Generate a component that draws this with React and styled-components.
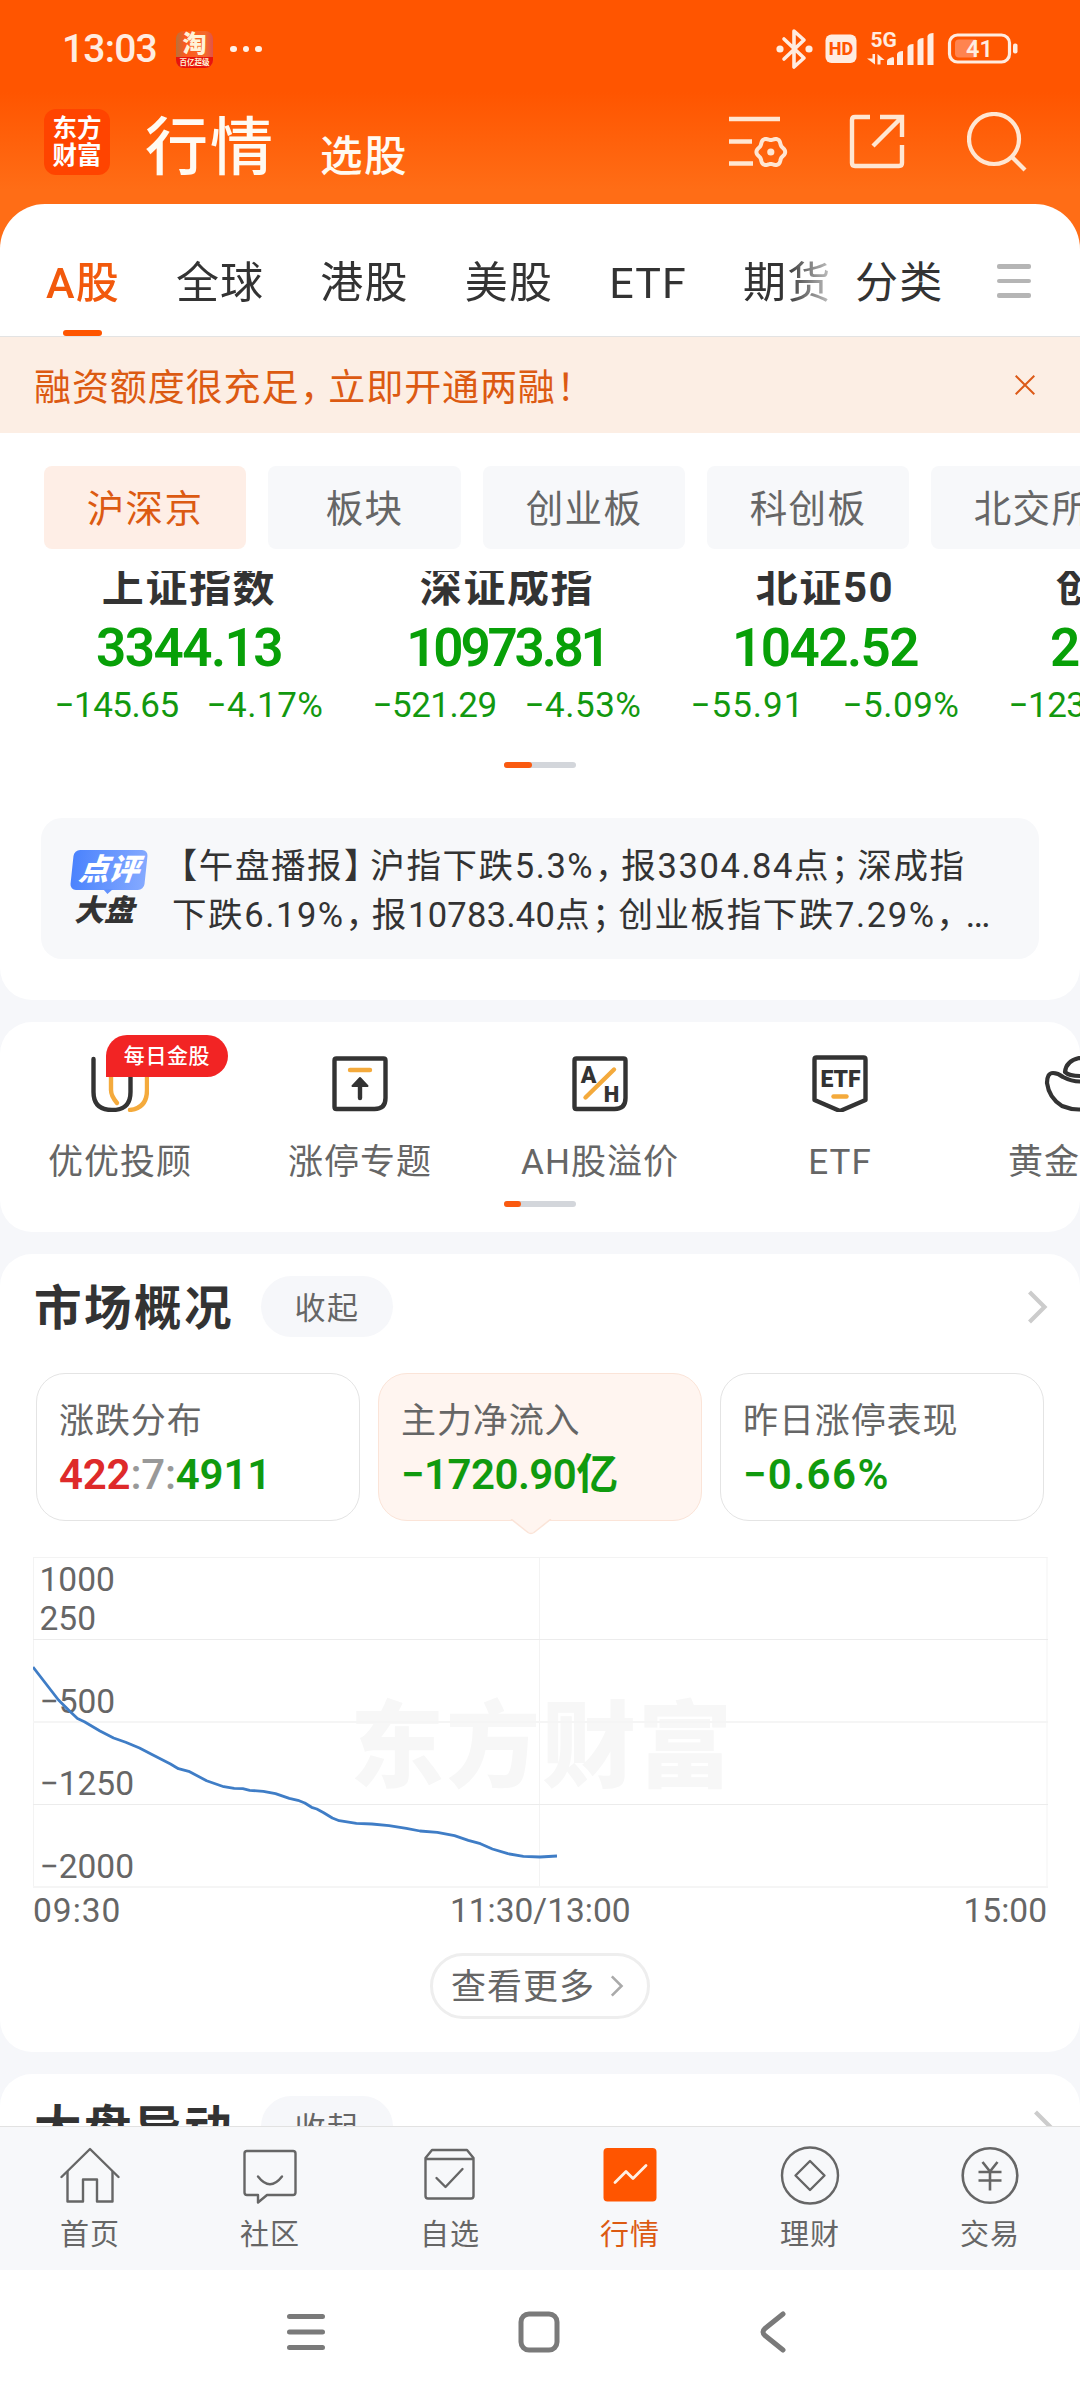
import React from 'react';
import styled, { createGlobalStyle } from 'styled-components';

const tabs = ['全球', '港股', '美股', 'ETF', '期货'];
const boards = ['沪深京', '板块', '创业板', '科创板', '北交所'];

const indexes = [
    { name: '上证指数', value: '3344.13', change: '−145.65', percent: '−4.17%' },
    { name: '深证成指', value: '10973.81', change: '−521.29', percent: '−4.53%' },
    { name: '北证50', value: '1042.52', change: '−55.91', percent: '−5.09%' },
    { name: '创业板指', value: '2042.52', change: '−123.45', percent: '−5.77%' },
];

const flow = [
    [0, 110], [25.5, 143], [37.6, 155], [44.5, 161.5], [51.4, 164.8], [67, 174], [80.6, 181], [92.7, 185.3],
    [106.5, 191], [118.5, 197.3], [137.5, 207], [145.4, 211.7], [155.7, 214.3], [173.6, 223.7], [190.8, 229.7],
    [201.2, 231.3], [209.8, 231.7], [216.7, 233.3], [230.4, 234.3], [242.5, 236.7], [256.3, 241.3], [264.9, 243.3],
    [271.8, 246], [278.6, 250.3], [283.8, 252], [290.7, 255.7], [299.3, 261], [306.2, 263.7], [323.4, 266.3],
    [338.9, 267], [356, 268.7], [373.3, 271.3], [387, 274], [404.3, 275.3], [421.5, 278.7], [435.3, 283.3],
    [447.4, 286.7], [459.4, 292], [474.9, 296.7], [490.4, 299.3], [507, 300], [524, 299],
];

const axis = [
    { label: '1000', y: 22 },
    { label: '250', y: 61 },
    { label: '−500', y: 144 },
    { label: '−1250', y: 226 },
    { label: '−2000', y: 309 },
];

// six-lobed outline of the settings gear
const gear = Array.from({ length: 73 }, (_, i) => {
    const a = (i / 72) * Math.PI * 2;
    const r = 13.2 + 1.2 * Math.cos(a * 6);
    return `${(41.8 + r * Math.cos(a)).toFixed(2)},${(38 + r * Math.sin(a)).toFixed(2)}`;
}).join(' ');

const StatusIcons = () => (
    <svg width="244" height="44" viewBox="0 0 244 44" fill="none" stroke="#ffece0">
        <path d="M8 12l20 19-10 9V4l10 9L8 32" strokeWidth="3.6" strokeLinejoin="round" strokeLinecap="round" />
        <g fill="#ffece0" stroke="none">
            <circle cx="4" cy="22" r="3.6" />
            <circle cx="33" cy="22" r="3.6" />
            <rect x="49.5" y="7.5" width="31" height="28.5" rx="6" />
            <text x="65" y="28" fontSize="18" fontWeight="800" textAnchor="middle" fill="#ff5500">HD</text>
            <text x="94.5" y="20" fontSize="21" fontWeight="700">5G</text>
            <path d="M96.5 27h2.5v10.5l-8-6h5.5zM101.5 37.5V27l7 6h-4v4.5z" />
            <path d="M111 38v-4q0-2 3-3l3-1q1 0 1 2v6zM121 38V27q1-3 6-3v14zM131.500 38V20q1-3 6-3v21zM141.500 38V14q1-3 6-3v27zM151.500 38V9q1-3 6-3v32z" />
        </g>
        <rect x="173.500" y="8" width="60" height="27" rx="8" strokeWidth="3.200" />
        <path d="M183 12.500h17v18h-17q-4 0-4-4v-10q0-4 4-4z" fill="#ff8450" stroke="none" />
        <rect x="237" y="16.500" width="4.500" height="10" rx="2" fill="#ffece0" stroke="none" />
        <text x="203.500" y="30" fontSize="23.500" fontWeight="600" textAnchor="middle" fill="#ffece0" stroke="none">41</text>
    </svg>
);

const ListIcon = () => (
    <svg width="60" height="56" viewBox="0 0 60 56" fill="none" stroke="#ffe6d2" strokeWidth="4.400">
        <path d="M0 5h51M0 27.500h23M0 49.500h24" />
        <polygon points={gear} strokeLinejoin="round" strokeWidth="4" />
        <circle cx="41.800" cy="38" r="3.600" fill="#ffe6d2" stroke="none" />
    </svg>
);

const ShareIcon = () => (
    <svg width="56" height="56" viewBox="0 0 56 56" fill="none" stroke="#ffe6d2" strokeWidth="4.400">
        <path d="M21 3H6q-3 0-3 3v43q0 3 3 3h44q3 0 3-3V31" />
        <path d="M31 3h22v20M52 4L24 32" />
    </svg>
);

const SearchIcon = () => (
    <svg width="60" height="60" viewBox="0 0 60 60" fill="none" stroke="#ffe6d2" strokeWidth="4.200">
        <circle cx="27" cy="27" r="25" />
        <path d="M44 44l14 14" />
    </svg>
);

const Chevron = ({ width = 21, height = 34, color = '#cccccc', weight = 4.2 }) => (
    <svg width={width} height={height} viewBox="0 0 21 34" fill="none" stroke={color} strokeWidth={weight}>
        <path d="M2.500 2l15 15-15 15" />
    </svg>
);

const AdvisorIcon = () => (
    <svg width="58" height="58" viewBox="0 0 58 58" fill="none" strokeWidth="4.400" strokeLinecap="round">
        <path d="M20 10v26q0 6 6 13" stroke="#f4aa3c" />
        <path d="M56 10v26q0 18-17 20" stroke="#f4aa3c" />
        <path d="M2.500 5v33q0 18 18.500 18t18.500-18V10" stroke="#333333" />
    </svg>
);

const LimitUpIcon = () => (
    <svg width="58" height="58" viewBox="0 0 58 58" fill="none" stroke="#333333" strokeWidth="4.400">
        <path d="M5.500 4.500h47q2 0 2 2V44q0 11-11 11h-38q-2 0-2-2V6.500q0-2 2-2z" />
        <path d="M19 16h20" stroke="#f4aa3c" strokeLinecap="round" />
        <path d="M29 31v13" strokeLinecap="round" />
        <path d="M29 24l7.500 8h-15z" fill="#333333" strokeWidth="2" strokeLinejoin="round" />
    </svg>
);

const PremiumIcon = () => (
    <svg width="58" height="58" viewBox="0 0 58 58" fill="none" stroke="#333333" strokeWidth="4.400">
        <path d="M5.500 4.500h47q2 0 2 2V44q0 11-11 11h-38q-2 0-2-2V6.500q0-2 2-2z" />
        <path d="M14.500 43.500L43 15.500" stroke="#f4aa3c" strokeLinecap="round" />
        <text x="17.500" y="28.500" fontSize="23" fontWeight="900" textAnchor="middle" fill="#333333" stroke="none">A</text>
        <text x="40.500" y="47.500" fontSize="22" fontWeight="900" textAnchor="middle" fill="#333333" stroke="none">H</text>
    </svg>
);

const EtfIcon = () => (
    <svg width="58" height="58" viewBox="0 0 58 58" fill="none" stroke="#333333" strokeWidth="4.400" strokeLinejoin="round">
        <path d="M5.500 3.500h47q2 0 2 2V46L29 57 3.500 46V5.500q0-2 2-2z" />
        <path d="M22.500 42.500h13" stroke="#f4aa3c" strokeLinecap="round" />
        <text x="29.500" y="33" fontSize="23" fontWeight="900" textAnchor="middle" fill="#333333" stroke="none">ETF</text>
    </svg>
);

const GoldIcon = () => (
    <svg width="72" height="58" viewBox="0 0 72 58" fill="none" stroke="#333333" strokeWidth="4.200" strokeLinejoin="round">
        <path d="M9 19q-6 0-6 10 2 15 15 23 17 7 34 0 14-8 16-23 0-10-7-10-4 0-8 4-17 9-34 0-5-4-10-4z" />
        <path d="M21 18q1-11 14-14 15 2 16 14-4 4-15 4t-15-4z" />
    </svg>
);

const HomeIcon = () => (
    <svg width="60" height="60" viewBox="0 0 60 60" fill="none" stroke="#666666" strokeWidth="2.400" strokeLinecap="round" strokeLinejoin="round">
        <path d="M1.500 32L30 4l28.500 28" />
        <path d="M7.500 27v29.500h15.500V34.500h14v22h15.500V27" />
    </svg>
);

const ChatIcon = () => (
    <svg width="60" height="60" viewBox="0 0 60 60" fill="none" stroke="#666666" strokeWidth="2.400" strokeLinecap="round" strokeLinejoin="round">
        <path d="M7 6h46q2.500 0 2.500 2.500v39q0 2.500-2.500 2.500H27l-9 7.500V50H7q-2.500 0-2.500-2.500v-39Q4.500 6 7 6z" />
        <path d="M18 31.500q12 15.500 24 0" />
    </svg>
);

const WatchIcon = () => (
    <svg width="60" height="60" viewBox="0 0 60 60" fill="none" stroke="#666666" strokeWidth="2.400" strokeLinecap="round" strokeLinejoin="round">
        <path d="M5.500 14h48v37q0 2.500-2.500 2.500H8q-2.500 0-2.500-2.500V13l6.500-8h35l6.500 8v1" />
        <path d="M16.500 33l9 9L42.500 24" />
    </svg>
);

const QuoteIcon = () => (
    <svg width="60" height="60" viewBox="0 0 60 60" fill="none">
        <rect x="3.500" y="3" width="53" height="53.500" rx="4" fill="#ff5500" />
        <path d="M15 37.500l11-11 7 7L46 20.500" stroke="#fff0e4" strokeWidth="2.800" strokeLinecap="round" strokeLinejoin="round" />
    </svg>
);

const WealthIcon = () => (
    <svg width="60" height="60" viewBox="0 0 60 60" fill="none" stroke="#666666" strokeWidth="2.400" strokeLinejoin="round">
        <circle cx="30" cy="30.500" r="28" />
        <path d="M30 16l14.500 14.500L30 45 15.500 30.500z" />
    </svg>
);

const TradeIcon = () => (
    <svg width="60" height="60" viewBox="0 0 60 60" fill="none" stroke="#666666" strokeWidth="2.600">
        <circle cx="30" cy="30.500" r="27.300" />
        <path d="M22.500 17l7.500 9.500 7.500-9.500M18.500 27h23M18.500 35.500h23M30 26.500V45.500" />
    </svg>
);

const shortcuts = [
    { label: '优优投顾', icon: <AdvisorIcon />, badge: '每日金股' },
    { label: '涨停专题', icon: <LimitUpIcon /> },
    { label: 'AH股溢价', icon: <PremiumIcon /> },
    { label: 'ETF', icon: <EtfIcon /> },
    { label: '黄金专区', icon: <GoldIcon /> },
];

const navItems = [
    { label: '首页', icon: <HomeIcon /> },
    { label: '社区', icon: <ChatIcon /> },
    { label: '自选', icon: <WatchIcon /> },
    { label: '行情', icon: <QuoteIcon />, active: true },
    { label: '理财', icon: <WealthIcon /> },
    { label: '交易', icon: <TradeIcon /> },
];

const FlowChart = () => (
    <ChartSvg width="1015" height="331" viewBox="0 0 1015 331">
        <text x="509" y="223" fontSize="94" fontWeight="900" letterSpacing="2" textAnchor="middle" fill="#f7f7f7">东方财富</text>
        <path d="M.5 0v330M506.500 0v330M1014 0v330M0 .5h1014.500" stroke="#f3f3f3" fill="none" />
        <path d="M0 82.500h1015M0 247.500h1015" stroke="#ececec" />
        <path d="M0 165h1015M0 330h1015" stroke="#f5f5f5" strokeWidth="2" />
        {axis.map((tick) => (
            <text key={tick.label} x="6.500" y={tick.y + 12} fontSize="33.500" fill="#666666">{tick.label}</text>
        ))}
        <polyline points={flow.join(' ')} fill="none" stroke="#3f7dc6" strokeWidth="2.800" strokeLinejoin="round" />
    </ChartSvg>
);

const App = () => {
    return (
        <Screen>
            <GlobalStyle />
            <Content>
                <Header>
                    <StatusBar>
                        <Clock>13:03</Clock>
                        <AppBadge>
                            <b>淘</b>
                            <small>百亿超级</small>
                        </AppBadge>
                        <Dots><i /><i /><i /></Dots>
                        <StatusIcons />
                    </StatusBar>
                    <TitleRow>
                        <Logo>东方<br />财富</Logo>
                        <PageTitle>行情</PageTitle>
                        <SubTitle>选股</SubTitle>
                        <Tools>
                            <ListIcon />
                            <ShareIcon />
                            <SearchIcon />
                        </Tools>
                    </TitleRow>
                    <TabSheet>
                        <TabScroller>
                            <Tab $active>A股</Tab>
                            {tabs.map((tab) => <Tab key={tab}>{tab}</Tab>)}
                        </TabScroller>
                        <Tab>分类</Tab>
                        <MenuLines><i /><i /><i /></MenuLines>
                    </TabSheet>
                </Header>
                <Banner>
                    <span>融资额度很充足<Tight>，</Tight>立即开通两融<Tight>！</Tight></span>
                    <svg width="20" height="20" viewBox="0 0 20 20" fill="none" stroke="#dc5a18" strokeWidth="2">
                        <path d="M.7.7l18.600 18.600M19.300.7L.7 19.300" />
                    </svg>
                </Banner>

                <Overview>
                    <Chips>
                        {boards.map((board, i) => (
                            <Chip key={board} $active={i === 0} $short={board.length === 2}>{board}</Chip>
                        ))}
                    </Chips>
                    <IndexStrip>
                        {indexes.map((item) => (
                            <IndexItem key={item.name}>
                                <IndexName>{item.name}</IndexName>
                                <IndexValue $long={item.value.length > 7}>{item.value}</IndexValue>
                                <IndexChange $short={item.change.length < 7}>
                                    <span>{item.change}</span>
                                    <span>{item.percent}</span>
                                </IndexChange>
                            </IndexItem>
                        ))}
                    </IndexStrip>
                    <Pager $top={22} $width={28} />
                    <NewsCard>
                        <NewsLogo>
                            <NewsTag>点评</NewsTag>
                            <NewsName>大盘</NewsName>
                        </NewsLogo>
                        <NewsText>
                            <div><TightLeft>【</TightLeft>午盘播报<Tight>】</Tight>沪指下跌5.3%<Tight>，</Tight>报3304.84点<Tight>；</Tight>深成指</div>
                            <div>下跌6.19%<Tight>，</Tight>报<Figure>10783.40</Figure>点<Tight>；</Tight>创业板指下跌7.29%<Tight>，</Tight><Ellipsis>…</Ellipsis></div>
                        </NewsText>
                    </NewsCard>
                </Overview>

                <Shortcuts>
                    <ShortcutRow>
                        {shortcuts.map((item) => (
                            <Shortcut key={item.label}>
                                {item.icon}
                                {item.badge && <Badge>{item.badge}</Badge>}
                                <span>{item.label}</span>
                            </Shortcut>
                        ))}
                    </ShortcutRow>
                    <Pager $top={18} $width={17} />
                </Shortcuts>

                <Section>
                    <SectionHead>
                        <h2>市场概况</h2>
                        <Fold>收起</Fold>
                        <Chevron />
                    </SectionHead>
                    <Stats>
                        <Stat>
                            <span>涨跌分布</span>
                            <strong><Up>422</Up><Flat>:7:</Flat>4911</strong>
                        </Stat>
                        <Stat $active $spacing={-0.5}>
                            <span>主力净流入</span>
                            <strong>−1720.90亿</strong>
                            <Pointer width="44" height="16" viewBox="0 0 44 16">
                                <path d="M2 0l17 13.500q3 2 6 0L42 0" fill="#fff5f0" stroke="#fbe4d8" strokeWidth="1.500" />
                            </Pointer>
                        </Stat>
                        <Stat $spacing={1.4}>
                            <span>昨日涨停表现</span>
                            <strong>−0.66%</strong>
                        </Stat>
                    </Stats>
                    <FlowChart />
                    <TimeAxis>
                        <span>09:30</span>
                        <span>11:30/13:00</span>
                        <span>15:00</span>
                    </TimeAxis>
                    <MoreButton>
                        <span>查看更多</span>
                        <Chevron width={14} height={22} color="#aaaaaa" weight={4} />
                    </MoreButton>
                </Section>

                <Section>
                    <SectionHead $last>
                        <h2>大盘异动</h2>
                        <Fold>收起</Fold>
                        <Chevron />
                    </SectionHead>
                </Section>
            </Content>

            <BottomNav>
                {navItems.map((item) => (
                    <NavItem key={item.label} $active={item.active}>
                        {item.icon}
                        <span>{item.label}</span>
                    </NavItem>
                ))}
            </BottomNav>
            <SystemBar>
                <svg width="40" height="44" viewBox="0 0 40 44" stroke="#7a7a7a" strokeWidth="5" strokeLinecap="round">
                    <path d="M3.500 6.500h33M3.500 22h33M3.500 37.500h33" />
                </svg>
                <svg width="44" height="44" viewBox="0 0 44 44" fill="none" stroke="#7a7a7a" strokeWidth="5">
                    <rect x="4" y="4" width="36" height="36" rx="8" />
                </svg>
                <svg width="28" height="44" viewBox="0 0 28 44" fill="none" stroke="#7a7a7a" strokeWidth="5" strokeLinecap="round">
                    <path d="M24 4L6 18.500q-4 3.500 0 7L24 40" />
                </svg>
            </SystemBar>
        </Screen>
    );
};

export default App;


const GlobalStyle = createGlobalStyle`
    * {
        box-sizing: border-box;
    }
    body {
        margin: 0;
        font-family: Roboto, "Noto Sans CJK SC", sans-serif;
        color: #333;
    }
    svg {
        display: block;
        flex-shrink: 0;
    }
`;

const Screen = styled.div`
    width: 1080px;
    height: 2400px;
    overflow: hidden;
    background: #fff;
    display: flex;
    flex-direction: column;
`;

const Content = styled.main`
    height: 2126px;
    flex-shrink: 0;
    overflow: hidden;
    background: #f6f7fa;
`;

const Header = styled.header`
    background: linear-gradient(#ff5500 92px, #ff6d16 190px, #ff6d16);
`;

const StatusBar = styled.div`
    height: 98px;
    display: flex;
    align-items: center;
    padding: 0 60px 0 62px;

    > svg {
        margin-left: auto;
    }
`;

const Clock = styled.span`
    width: 114px;
    font-size: 39px;
    font-weight: 500;
    line-height: 100px;
    letter-spacing: -0.8px;
    color: #ffece0;
`;

const AppBadge = styled.div`
    width: 37px;
    height: 37px;
    border-radius: 8px;
    overflow: hidden;
    background: linear-gradient(90deg, #b9713a, #ff5a1c 25%, #f4692c 80%, #e0524a);
    color: #fff3d8;
    text-align: center;
    display: flex;
    flex-direction: column;

    b {
        font-size: 24px;
        line-height: 26px;
        height: 26px;
        font-weight: 900;
    }

    small {
        flex: 1;
        font-size: 7.500px;
        line-height: 11px;
        background: #e8140c;
        font-weight: 700;
    }
`;

const Dots = styled.div`
    display: flex;
    gap: 6px;
    margin-left: 17px;

    i {
        width: 6.500px;
        height: 6.500px;
        border-radius: 50%;
        background: #fff0e6;
    }
`;

const TitleRow = styled.div`
    height: 106px;
    padding: 0 53px 18px 44px;
    display: flex;
    align-items: center;
    color: #fffaf2;
`;

const Logo = styled.div`
    width: 66px;
    height: 66px;
    border-radius: 12px;
    background: #ff4400;
    color: #fff;
    font-size: 24.500px;
    font-weight: 700;
    line-height: 27px;
    padding-top: 6px;
    text-align: center;
`;

const PageTitle = styled.h1`
    margin: 11px 0 0 35px;
    font-size: 63px;
    font-weight: 500;
    line-height: 70px;
    letter-spacing: 2px;
`;

const SubTitle = styled.span`
    margin: 29px 0 0 45px;
    font-size: 42.500px;
    line-height: 50px;
    letter-spacing: 1.500px;
    font-weight: 500;
`;

const Tools = styled.div`
    margin-left: auto;
    display: flex;
    align-items: center;
    gap: 62px;

    svg:first-child {
        margin-right: -2px;
    }
`;

const TabSheet = styled.nav`
    height: 133px;
    border-radius: 45px 45px 0 0;
    border-bottom: 1px solid #e3e3e3;
    background: #fff;
    display: flex;
    padding-right: 49px;
`;

const TabScroller = styled.div`
    width: 841px;
    padding-left: 46px;
    margin-right: 14px;
    display: flex;
    gap: 56px;
    overflow: hidden;
    mask-image: linear-gradient(90deg, #000 785px, transparent 850px);
`;

const Tab = styled.div`
    flex-shrink: 0;
    position: relative;
    height: 132px;
    font-size: 43px;
    line-height: 158px;
    letter-spacing: 1.200px;
    white-space: nowrap;
    color: ${({ $active }) => ($active ? '#f2590c' : '#333')};
    font-weight: ${({ $active }) => ($active ? 500 : 400)};

    &::after {
        content: '';
        display: ${({ $active }) => ($active ? 'block' : 'none')};
        position: absolute;
        left: 50%;
        bottom: 0;
        width: 39px;
        height: 6px;
        margin-left: -20px;
        border-radius: 3px;
        background: #ff5500;
    }
`;

const MenuLines = styled.div`
    margin: 60px 0 0 auto;
    width: 34px;
    display: flex;
    flex-direction: column;
    gap: 10px;

    i {
        height: 4.500px;
        border-radius: 2px;
        background: #b5b5b5;
    }
`;

const Banner = styled.div`
    height: 96px;
    background: #fceee4;
    color: #dc5a12;
    padding: 0 45px 0 34px;
    display: flex;
    align-items: center;
    justify-content: space-between;
    font-size: 37px;
    letter-spacing: 0.900px;
`;

/* full-width punctuation pulled in to roughly three quarters of an em */
const Tight = styled.span`
    margin-left: 0.020em;
    letter-spacing: -0.235em;
`;

const TightLeft = styled.span`
    margin-left: -0.270em;
`;

const Figure = styled.span`
    letter-spacing: 0.300px;
`;

const Ellipsis = styled.span`
    margin-left: 0.080em;
    font-size: 1.080em;
    letter-spacing: 0;
`;

const Overview = styled.section`
    height: 567px;
    border-radius: 0 0 32px 32px;
    background: #fff;
    overflow: hidden;
`;

const Chips = styled.div`
    display: flex;
    gap: 22px;
    padding: 33px 0 22px 44px;
`;

const Chip = styled.div`
    flex-shrink: 0;
    width: ${({ $short }) => ($short ? 193 : 202)}px;
    height: 83px;
    border-radius: 8px;
    text-align: center;
    font-size: 37.500px;
    line-height: 87px;
    letter-spacing: 1.300px;
    background: ${({ $active }) => ($active ? '#feeee6' : '#f7f8fa')};
    color: ${({ $active }) => ($active ? '#dc5a12' : '#666')};
`;

const IndexStrip = styled.div`
    height: 169px;
    padding-left: 30px;
    display: flex;
    overflow: hidden;
`;

const IndexItem = styled.div`
    width: 318px;
    flex-shrink: 0;
    margin-top: -5px;
    text-align: center;
    white-space: nowrap;
`;

const IndexName = styled.div`
    font-size: 42px;
    font-weight: 700;
    line-height: 44px;
    letter-spacing: 1.600px;
`;

const IndexValue = styled.div`
    margin-top: 8px;
    font-size: 53px;
    font-weight: 600;
    line-height: 60px;
    letter-spacing: ${({ $long }) => ($long ? -3.2 : -1.5)}px;
    color: #08a008;
`;

const IndexChange = styled.div`
    width: 269px;
    margin: 8px auto 0;
    display: flex;
    justify-content: space-between;
    font-size: 35px;
    line-height: 40px;
    letter-spacing: ${({ $short }) => ($short ? 1 : -0.5)}px;
    color: #12980f;

    span:last-child {
        letter-spacing: 0.500px;
    }
`;

const Pager = styled.div`
    width: 72px;
    height: 6px;
    margin: ${({ $top }) => $top}px auto 0;
    border-radius: 3px;
    background: #d3d6db;

    &::before {
        content: '';
        display: block;
        width: ${({ $width }) => $width}px;
        height: 6px;
        border-radius: 3px;
        background: #fa5a10;
    }
`;

const NewsCard = styled.div`
    height: 141px;
    margin: 50px 41px 0;
    border-radius: 21px;
    background: #f7f8fa;
    display: flex;
    align-items: center;
    padding-left: 29px;
`;

const NewsLogo = styled.div`
    width: 102px;
    font-weight: 900;
    font-style: italic;
`;

const NewsTag = styled.div`
    width: 74px;
    height: 40px;
    margin-left: 2px;
    border-radius: 6px;
    transform: skewX(-6deg);
    background: linear-gradient(90deg, #4b83fd, #84a9ff);
    color: #fff;
    font-size: 30px;
    line-height: 39px;
    text-align: center;
    position: relative;

    &::after {
        content: '';
        position: absolute;
        left: 33px;
        top: 39px;
        border: 5px solid transparent;
        border-top-color: #6292fd;
        border-bottom: 0;
    }
`;

const NewsName = styled.div`
    margin: 5px 0 0 4px;
    font-size: 30px;
    line-height: 32px;
`;

const NewsText = styled.div`
    padding-top: 4px;
    font-size: 34.500px;
    line-height: 48.500px;
    letter-spacing: 1.600px;
    white-space: nowrap;
`;

const Shortcuts = styled.section`
    height: 210px;
    margin-top: 22px;
    padding-top: 32px;
    border-radius: 32px;
    background: #fff;
    overflow: hidden;
`;

const ShortcutRow = styled.div`
    display: flex;
`;

const Shortcut = styled.div`
    position: relative;
    width: 240px;
    flex-shrink: 0;
    display: flex;
    flex-direction: column;
    align-items: center;
    color: #666;

    > span {
        margin-top: 31px;
        font-size: 35px;
        line-height: 40px;
        letter-spacing: 1px;
    }
`;

const Badge = styled.div`
    position: absolute;
    left: 106px;
    top: -19px;
    width: 122px;
    height: 42px;
    border-radius: 21px 21px 21px 0;
    background: #f22424;
    color: #fff;
    text-align: center;
    font-size: 21px;
    font-weight: 500;
    line-height: 43px;
    letter-spacing: 0.600px;
`;

const Section = styled.section`
    height: 798px;
    margin-top: 22px;
    padding-top: 22px;
    border-radius: 32px;
    background: #fff;
`;

const SectionHead = styled.div`
    height: 61px;
    display: flex;
    align-items: center;
    padding: 0 ${({ $last }) => ($last ? 26 : 32)}px 0 34px;

    h2 {
        margin: 6px 0 0;
        width: 227px;
        font-size: 47.500px;
        line-height: 61px;
        letter-spacing: 2.500px;
        font-weight: 700;
    }

    svg {
        margin-left: auto;
    }
`;

const Fold = styled.div`
    width: 132px;
    height: 61px;
    border-radius: 31px;
    background: #f6f7fa;
    color: #666;
    font-size: 31px;
    line-height: 65px;
    letter-spacing: 1.400px;
    text-align: center;
`;

const Stats = styled.div`
    display: flex;
    gap: 18px;
    margin: 36px 36px 0;
`;

const Stat = styled.div`
    position: relative;
    flex: 1;
    height: 148px;
    border: 1.500px solid ${({ $active }) => ($active ? '#fbe4d8' : '#e4e4e4')};
    border-radius: 29px;
    background: ${({ $active }) => ($active ? '#fff5f0' : '#fff')};
    padding: 26px 0 0 22px;
    display: flex;
    flex-direction: column;
    color: #666;

    span {
        font-size: 35px;
        line-height: 44px;
        letter-spacing: 0.900px;
    }

    strong {
        margin-top: 8px;
        font-size: 42px;
        line-height: 46px;
        font-weight: 600;
        letter-spacing: ${({ $spacing = -0.2 }) => $spacing}px;
        color: #109a0e;
    }
`;

const Up = styled.b`
    font-weight: 600;
    color: #de2a2a;
`;

const Flat = styled.b`
    font-weight: 500;
    color: #999;
`;

const Pointer = styled.svg`
    position: absolute;
    left: 130px;
    top: 145px;
`;

const ChartSvg = styled.svg`
    margin: 36px 0 -1px 33px;
`;

const TimeAxis = styled.div`
    display: flex;
    justify-content: space-between;
    padding: 1px 33px 0 33px;
    font-size: 33.500px;
    line-height: 46px;
    color: #666;

    span:first-child {
        width: 84px;
        letter-spacing: 1px;
    }
`;

const MoreButton = styled.div`
    width: 220px;
    height: 66px;
    margin: 19px auto 0;
    border: 3px solid #eee;
    border-radius: 33px;
    display: flex;
    align-items: center;
    padding-left: 18px;
    gap: 15px;
    font-size: 35px;
    letter-spacing: 1px;
    color: #666;

    span {
        line-height: 60px;
        padding-top: 3px;
    }
`;

const BottomNav = styled.nav`
    height: 144px;
    flex-shrink: 0;
    border-top: 1px solid #e2e2e2;
    background: #f7f8fa;
    display: flex;
`;

const NavItem = styled.div`
    flex: 1;
    padding-top: 18px;
    display: flex;
    flex-direction: column;
    align-items: center;
    color: ${({ $active }) => ($active ? '#dc5a12' : '#666')};

    span {
        margin-top: 12px;
        font-size: 29px;
        line-height: 36px;
        letter-spacing: 1px;
    }
`;

const SystemBar = styled.div`
    height: 130px;
    padding: 40px 0 0 286px;
    display: flex;

    svg:nth-child(2) {
        margin: 0 198px 0 191px;
    }
`;
